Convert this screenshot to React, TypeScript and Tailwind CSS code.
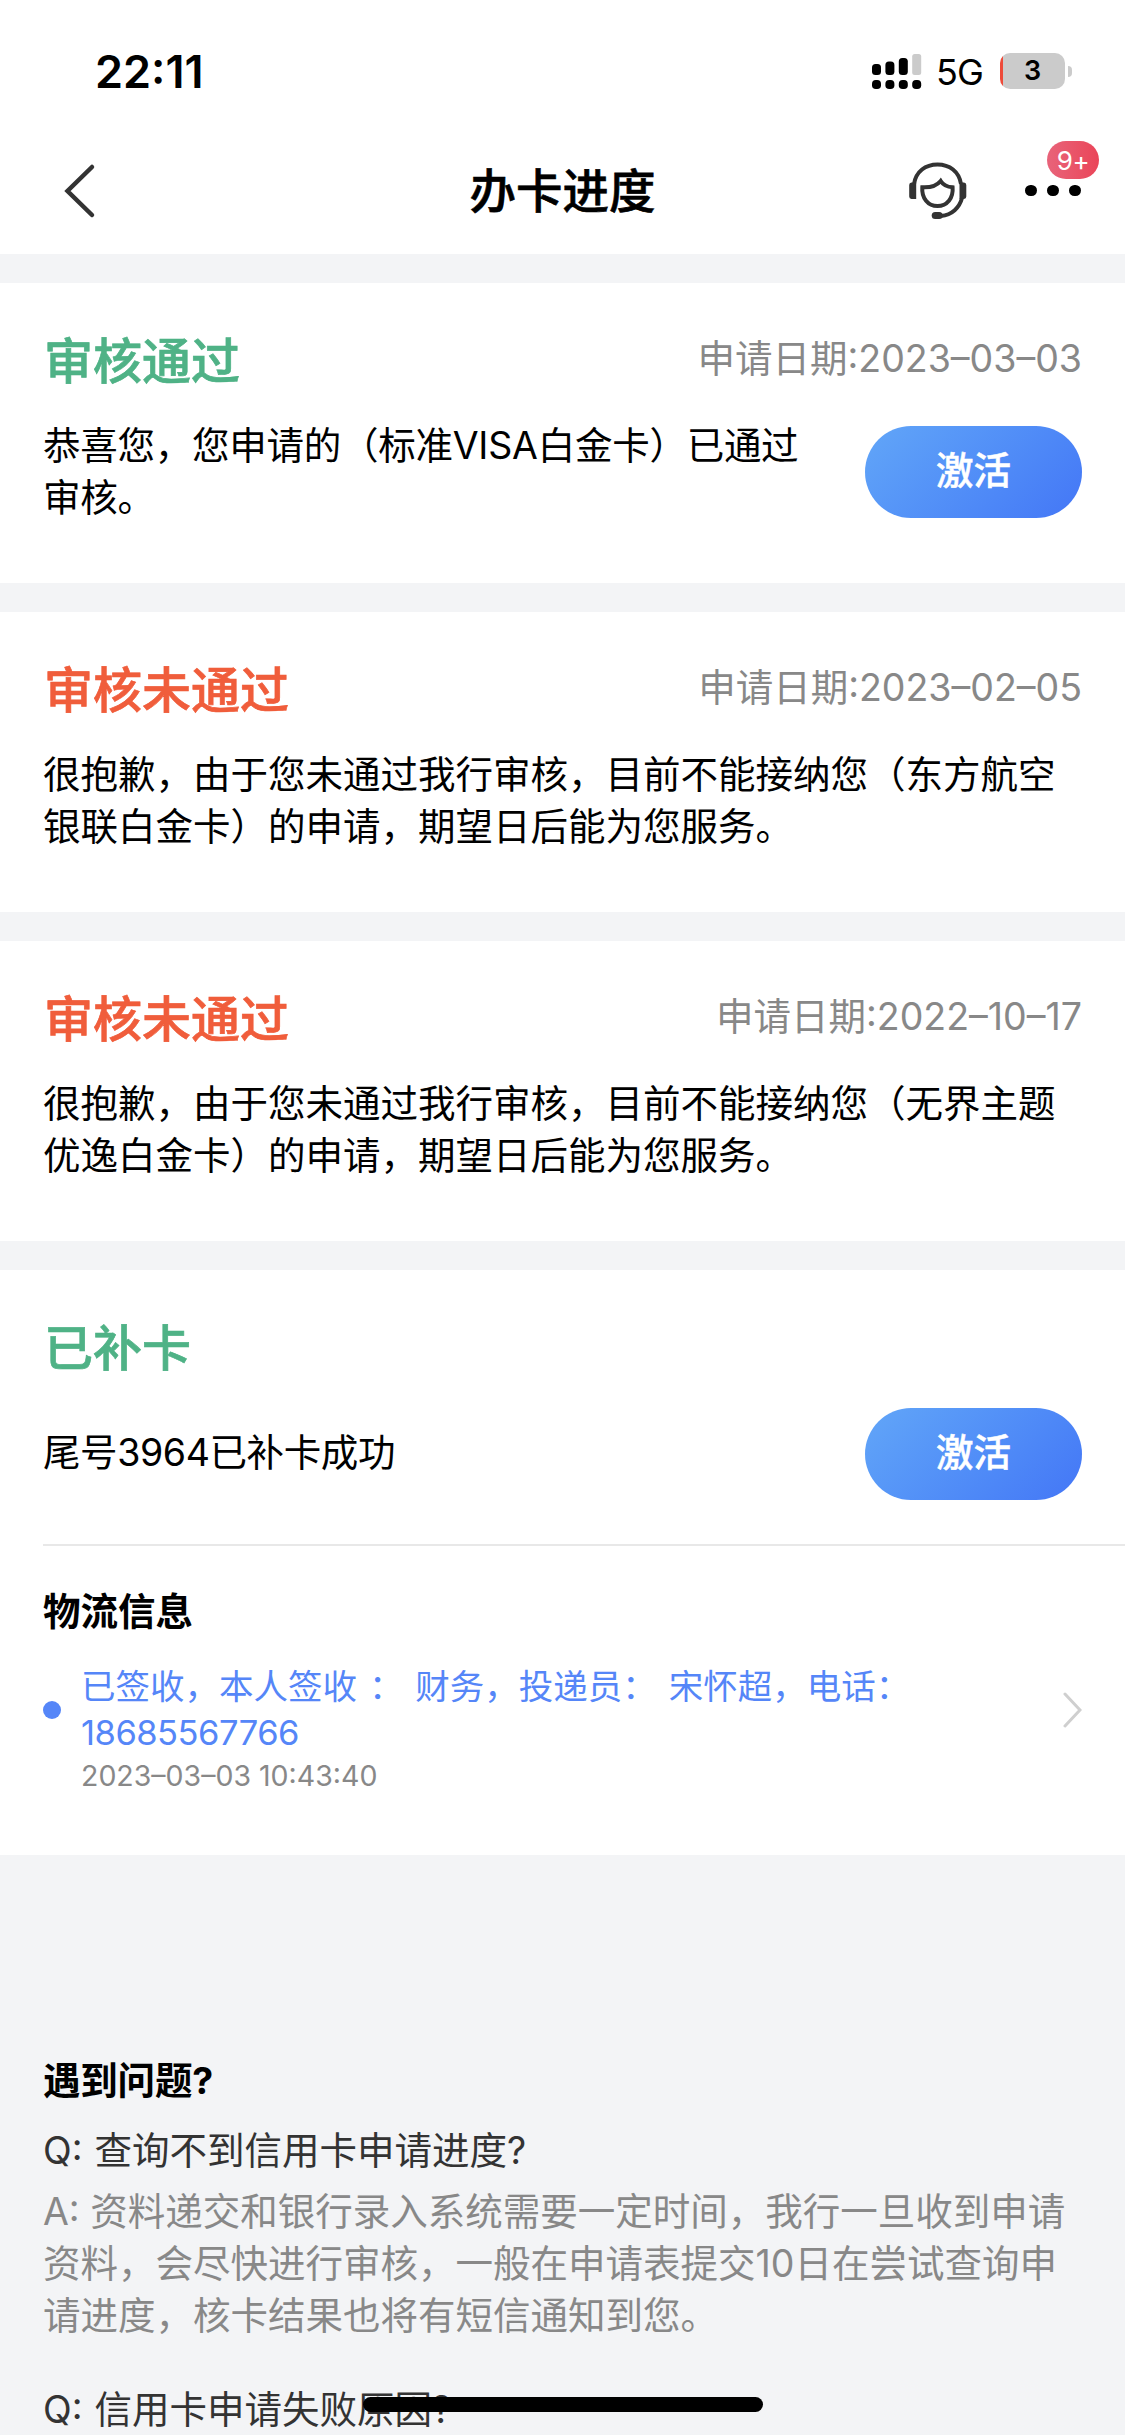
import { ReactNode } from "react";

type Status = 'passed' | 'rejected'

type Application = {
  id: number
  title: string
  status: Status
  date: string
  message: string
  canActivate?: boolean
}

const statusColors: Record<Status, string> = {
  passed: 'text-[#4fb286]',
  rejected: 'text-[#f05d3b]'
}

const applications: Application[] = [
  {
    id: 1,
    title: '审核通过',
    status: 'passed',
    date: '2023–03–03',
    message: '恭喜您，您申请的（标准VISA白金卡）已通过审核。',
    canActivate: true
  },
  {
    id: 2,
    title: '审核未通过',
    status: 'rejected',
    date: '2023–02–05',
    message: '很抱歉，由于您未通过我行审核，目前不能接纳您（东方航空银联白金卡）的申请，期望日后能为您服务。'
  },
  {
    id: 3,
    title: '审核未通过',
    status: 'rejected',
    date: '2022–10–17',
    message: '很抱歉，由于您未通过我行审核，目前不能接纳您（无界主题优逸白金卡）的申请，期望日后能为您服务。'
  }
]

function StatusBar() {
  return (
    <div className="flex h-[127px] items-start justify-between pt-[42px] pr-[53px] pl-[95px]">
      <span className="text-[45px] leading-[60px] font-semibold">22:11</span>
      <div className="flex items-center pt-[11px]">
        <svg className="h-[36px] w-[50px]" viewBox="0 0 50 36">
          <rect x="0" y="11" width="9" height="11" rx="3.5" />
          <rect x="13.4" y="8.5" width="9" height="13.5" rx="3.5" />
          <rect x="26.8" y="5" width="9" height="17" rx="3.5" />
          <rect x="40.2" y="1" width="9" height="21" rx="2.5" fill="#cbcbcb" />
          <rect x="0" y="27" width="9" height="9" rx="3.8" />
          <rect x="13.4" y="27" width="9" height="9" rx="3.8" />
          <rect x="26.8" y="27" width="9" height="9" rx="3.8" />
          <rect x="40.2" y="27" width="9" height="9" rx="3.8" />
        </svg>
        <span className="ml-[14px] h-[36px] w-[64px] text-[36px] leading-[39px] tracking-[-1px]">5G</span>
        <div className="h-[36px] w-[65px] rounded-[10px] bg-[linear-gradient(90deg,#ee4b3a_3px,#cbcbcb_3px)] text-center text-[27px] leading-[36px] font-semibold">
          3
        </div>
        <div className="ml-[3px] h-[11px] w-[4px] rounded-r-full bg-[#cbcbcb]" />
      </div>
    </div>
  )
}

function HeadsetIcon() {
  return (
    <svg className="h-[60px] w-[60px]" viewBox="0 0 60 60" fill="none" stroke="#333" strokeWidth="4">
      <path d="M6 23C8 10.500 17.500 3.500 29.500 3.500S51 10.500 53 23" />
      <path d="M54 37C51.500 46.500 44 54 33 55" />
      <path d="M3.500 21.500h4.700v16.500H3.500a2.500 2.500 0 0 1-2.300-2.500V24a2.500 2.500 0 0 1 2.300-2.500Z" fill="#333" stroke="none" />
      <path d="M51.500 21.500h4.500a2.500 2.500 0 0 1 2.300 2.500v11.500a2.500 2.500 0 0 1-2.300 2.500h-4.500Z" fill="#333" stroke="none" />
      <rect x="23.700" y="51" width="11" height="7" rx="3.500" fill="#333" stroke="none" />
      <path d="M14.300 26.300C23 26.800 29 24.500 32.700 20C35.500 24.500 39 26 44.600 26.300C45.500 37 39 45 29.500 45S13.500 37 14.300 26.300Z" />
    </svg>
  )
}

function Header() {
  return (
    <header className="grid h-[127px] grid-cols-[1fr_auto_1fr] items-center">
      <svg className="ml-[62px] h-[56px] w-[36px]" viewBox="0 0 36 56" fill="none" stroke="#333" strokeWidth="4.5" strokeLinecap="round">
        <path d="M30 4 5.500 28 30 52" />
      </svg>
      <h1 className="text-[46.500px] leading-[60px] font-medium [-webkit-text-stroke:0.6px]">办卡进度</h1>
      <div className="flex items-center justify-end pr-[44.500px]">
        <HeadsetIcon />
        <div className="relative ml-[57.500px] flex gap-[10.500px]">
          <i className="size-[11.500px] rounded-full bg-black" />
          <i className="size-[11.500px] rounded-full bg-black" />
          <i className="size-[11.500px] rounded-full bg-black" />
          <span className="absolute -top-[44px] left-[22px] h-[38px] w-[52px] rounded-full bg-linear-to-r from-[#e8637a] to-[#ea4458] text-center text-[26px] leading-[39px] tracking-[-0.5px] text-white">
            9+
          </span>
        </div>
      </div>
    </header>
  )
}

function ActivateButton() {
  return (
    <button className="h-[92px] w-[217px] shrink-0 rounded-full bg-linear-135 from-[#62a6f8] to-[#4476f6] pb-[2px] text-[37.500px] font-medium text-white [-webkit-text-stroke:0.5px]">
      激活
    </button>
  )
}

function CardTitle({ status, children }: { status: Status, children: ReactNode }) {
  return (
    <h2 className={`pl-[1px] text-[49px] leading-[60px] font-medium [-webkit-text-stroke:0.7px] ${statusColors[status]}`}>
      {children}
    </h2>
  )
}

function ApplicationCard({ application }: { application: Application }) {
  const { title, status, date, message, canActivate } = application

  return (
    <section className="h-[300px] bg-white px-[43px] pt-[49px]">
      <div className="flex justify-between">
        <CardTitle status={status}>{title}</CardTitle>
        <p className="leading-[53px] text-[#888]">申请日期:{date}</p>
      </div>
      <div className="mt-[28px] flex items-center justify-between">
        <p className={canActivate ? 'w-[765px] tracking-[-0.25px]' : 'w-[1030px]'}>{message}</p>
        {canActivate && <ActivateButton />}
      </div>
    </section>
  )
}

function ReplacementCard() {
  return (
    <section className="h-[585px] bg-white pt-[49px] pl-[43px]">
      <CardTitle status="passed">已补卡</CardTitle>
      <div className="mt-[29px] flex h-[138px] items-start justify-between border-b-2 border-[#e8e8e8] pr-[43px]">
        <p className="pt-[19px] tracking-[-0.4px]">尾号3964已补卡成功</p>
        <ActivateButton />
      </div>
      <h3 className="mt-[40px] font-bold">物流信息</h3>
      <div className="mt-[26px] flex items-center pr-[43px]">
        <i className="size-[18px] shrink-0 rounded-full bg-[#5586f8]" />
        <p className="ml-[20px] w-[860px] text-[34.500px] leading-[46px] text-[#5586f8] [word-spacing:2.2px]">
          已签收，本人签收 ： 财务，投递员： 宋怀超，电话：<br />
          <span className="tracking-[-0.5px]">18685567766</span>
        </p>
        <svg className="ml-auto h-[38px] w-[20px]" viewBox="0 0 20 38" fill="none" stroke="#cfcfcf" strokeWidth="3" strokeLinecap="round">
          <path d="M3 3 18 19 3 35" />
        </svg>
      </div>
      <p className="ml-[38px] text-[28.500px] leading-[40px] text-[#888]">2023–03–03 10:43:40</p>
    </section>
  )
}

function Faq() {
  return (
    <section className="px-[43px] pt-[200px]">
      <h3 className="font-bold tracking-[-0.2px]">遇到问题?</h3>
      <p className="mt-[18px] text-[#333] [word-spacing:1.5px]">Q: 查询不到信用卡申请进度?</p>
      <p className="mt-[9px] w-[1039px] text-[#888]">
        A: 资料递交和银行录入系统需要一定时间，我行一旦收到申请资料，会尽快进行审核，一般在申请表提交10日在尝试查询申请进度，核卡结果也将有短信通知到您。
      </p>
      <p className="mt-[42px] text-[#333] [word-spacing:1.5px]">Q: 信用卡申请失败原因?</p>
    </section>
  )
}

export default function App() {
  return (
    <div className="relative h-[2435px] w-[1125px] overflow-hidden bg-[#f3f4f6] font-['Inter','Noto_Sans_CJK_SC',sans-serif] text-[37.500px] leading-[52px] text-black" lang="zh-CN">
      <div className="bg-white">
        <StatusBar />
        <Header />
      </div>
      <main className="mt-[29px] flex flex-col gap-[29px]">
        {applications.map(application => (
          <ApplicationCard key={application.id} application={application} />
        ))}
        <ReplacementCard />
      </main>
      <Faq />

      {/* home indicator */}
      <div className="absolute bottom-[23px] left-[363px] h-[15px] w-[400px] rounded-full bg-black" />
    </div>
  )
}
